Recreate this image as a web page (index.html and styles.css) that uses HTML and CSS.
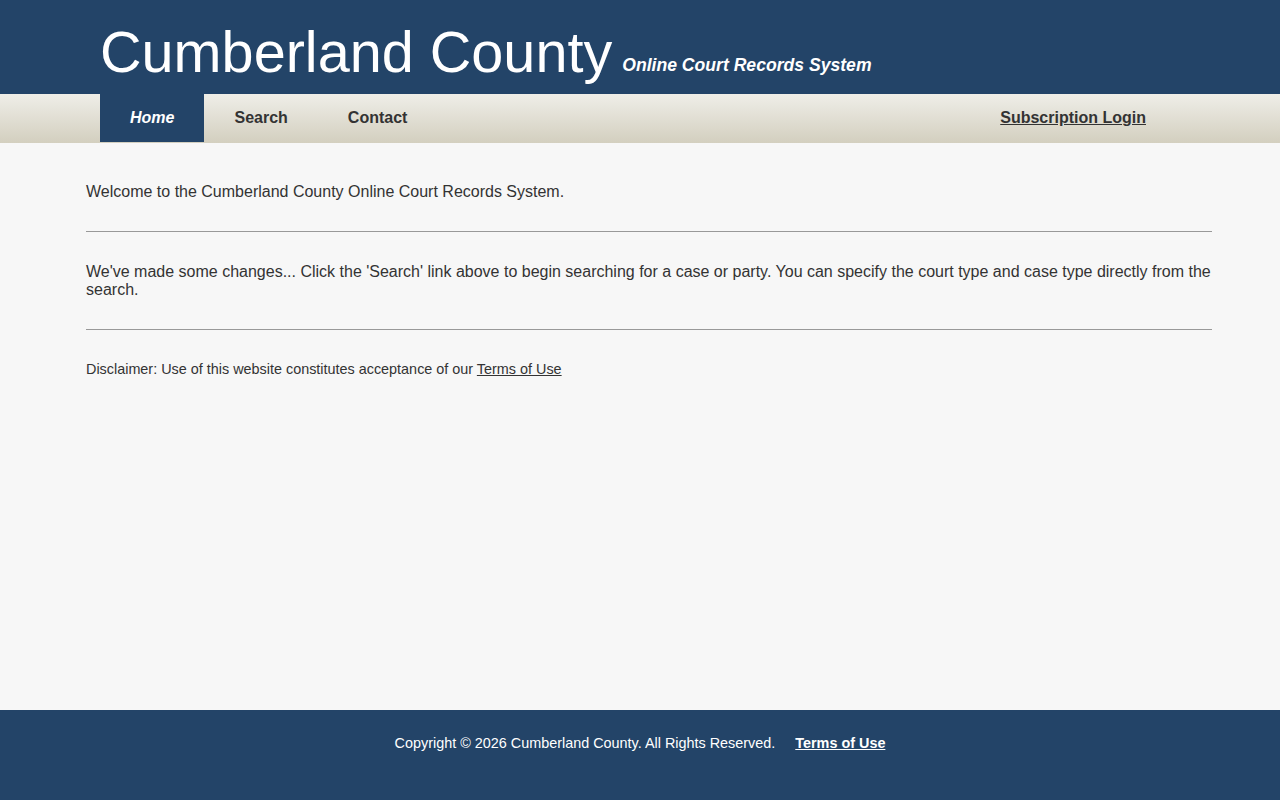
FILE: index.html
```html
<!DOCTYPE html>
<html lang="en">
<head>
<meta charset="utf-8">
<title>Cumberland County Online Court Records System</title>
<link rel="stylesheet" href="styles.css">
</head>
<body>
<header class="site-header">
  <h1 class="title">Cumberland County</h1>
  <span class="subtitle">Online Court Records System</span>
</header>
<nav class="nav">
  <ul class="nav-list">
    <li class="nav-item active"><a href="#">Home</a></li>
    <li class="nav-item"><a href="#">Search</a></li>
    <li class="nav-item"><a href="#">Contact</a></li>
  </ul>
  <a class="login" href="#">Subscription Login</a>
</nav>
<main class="content">
  <p class="text">Welcome to the Cumberland County Online Court Records System.</p>
  <hr class="rule rule-first">
  <p class="text">We've made some changes... Click the 'Search' link above to begin searching for a case or party. You can specify the court type and case type directly from the search.</p>
  <hr class="rule rule-second">
  <p class="disclaimer">Disclaimer: Use of this website constitutes acceptance of our <a href="#">Terms of Use</a></p>
</main>
<footer class="footer">
  <span class="copy">Copyright © 2026 Cumberland County. All Rights Reserved.</span>
  <a class="footer-link" href="#">Terms of Use</a>
</footer>
</body>
</html>
```
FILE: styles.css
```css
html, body {
  margin: 0;
  padding: 0;
}
body {
  font-family: "Liberation Sans", Arial, sans-serif;
  background: #f7f7f7;
  color: #333;
  min-height: 100vh;
  display: flex;
  flex-direction: column;
}
.site-header {
  background: #234468;
  height: 94px;
  box-sizing: border-box;
  padding: 24px 0 0 100px;
  display: flex;
  align-items: flex-start;
  gap: 10px;
}
.title {
  margin: 0;
  font-size: 57.6px;
  font-weight: normal;
  line-height: 1;
  color: #fff;
}
.subtitle {
  align-self: flex-end;
  margin-bottom: 18px;
  font-size: 17.6px;
  font-weight: bold;
  font-style: italic;
  color: #fff;
}
.nav {
  height: 49px;
  background: linear-gradient(to bottom, #efeee8, #d3cfbf);
  display: flex;
  justify-content: space-between;
  padding-left: 100px;
}
.nav-list {
  list-style: none;
  margin: 0;
  padding: 0;
  display: flex;
}
.nav-item a {
  display: block;
  padding: 0 30px;
  line-height: 47px;
  font-size: 16px;
  font-weight: bold;
  color: #333;
  text-decoration: none;
}
.nav-item.active a {
  background: #234468;
  color: #fff;
  font-style: italic;
  line-height: 48px;
}
.login {
  margin-right: 134px;
  line-height: 47px;
  font-size: 16px;
  font-weight: bold;
  color: #333;
  text-decoration: underline;
}
.content {
  flex: 1;
  padding: 40px 68px 0 86px;
}
.text {
  margin: 0;
  font-size: 16px;
  line-height: 18px;
}
.rule {
  border: 0;
  border-top: 1px solid #999;
  height: 0;
}
.rule-first {
  margin: 30px 0 31px;
}
.rule-second {
  margin: 30px 0 30px;
}
.disclaimer {
  margin: 31px 0 0;
  font-size: 14.4px;
  line-height: 17px;
}
.disclaimer a {
  color: #333;
}
.footer {
  background: #234468;
  height: 90px;
  box-sizing: border-box;
  padding-top: 24px;
  display: flex;
  justify-content: center;
  align-items: baseline;
  gap: 20px;
  color: #fff;
  font-size: 14.4px;
  line-height: 18px;
}
.footer-link {
  color: #fff;
  font-weight: bold;
  text-decoration: underline;
}
```
